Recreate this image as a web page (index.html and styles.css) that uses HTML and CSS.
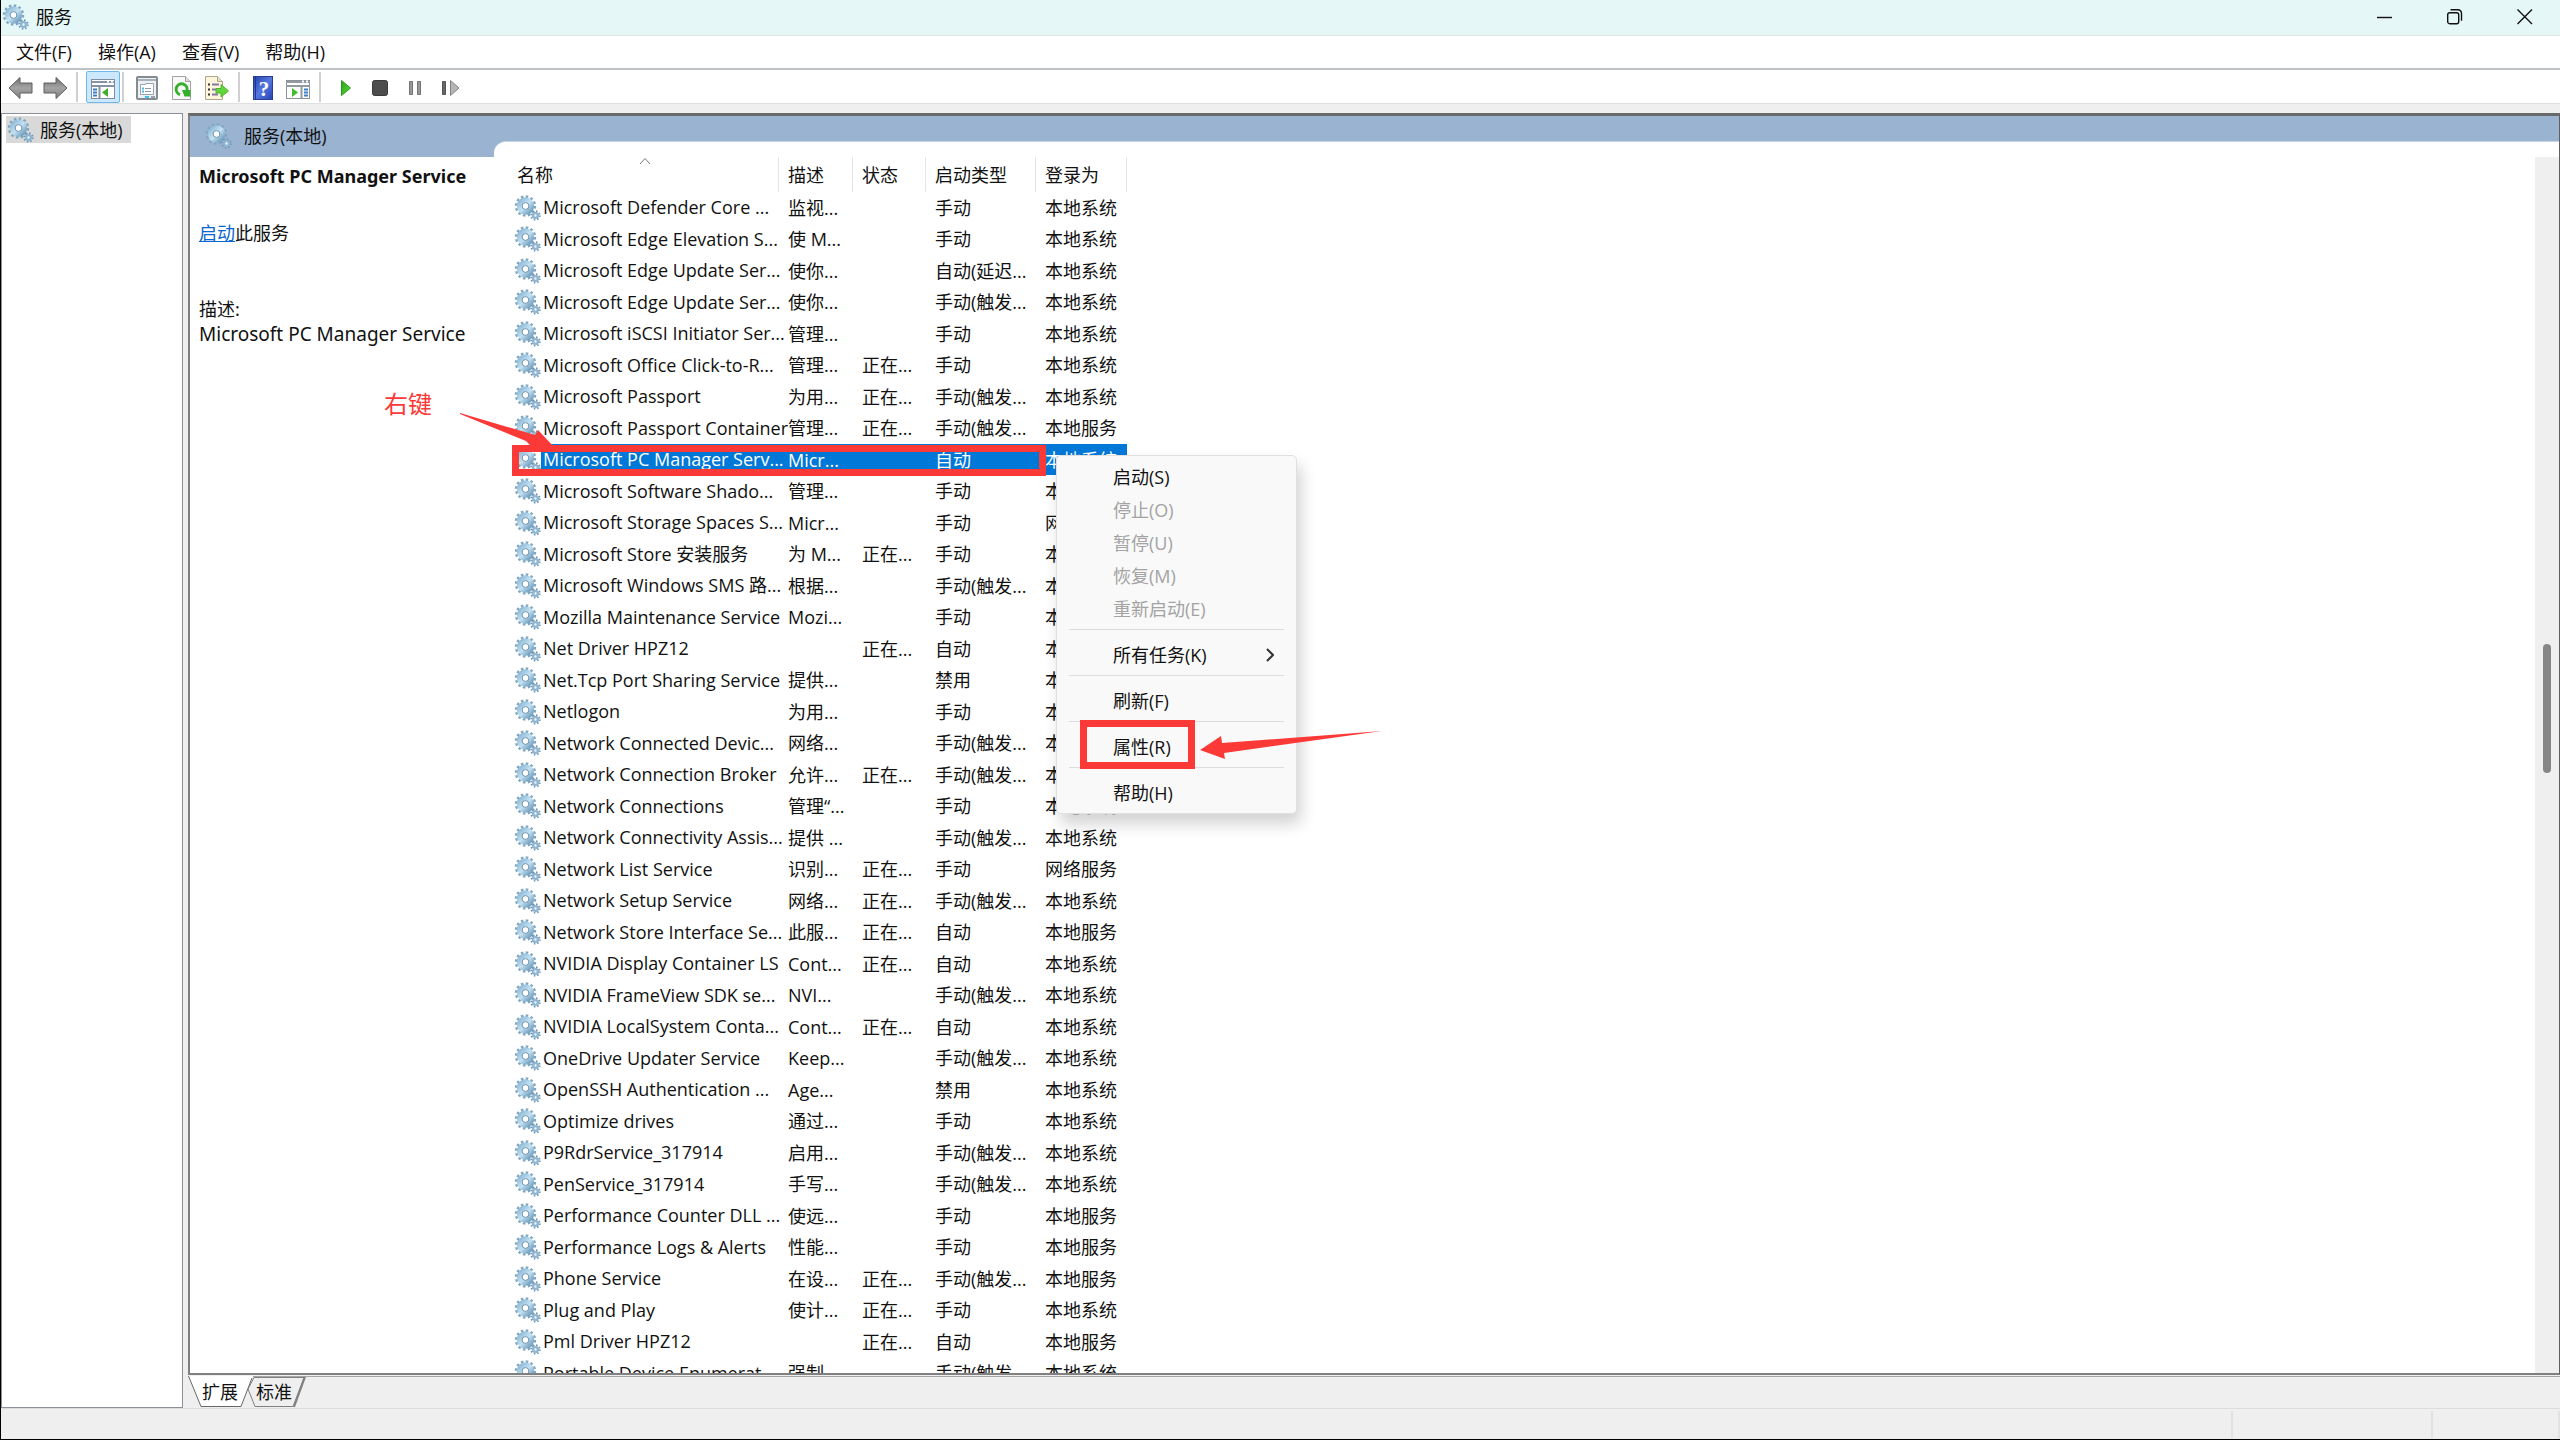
FILE: index.html
```html
<!DOCTYPE html>
<html lang="zh-CN">
<head>
  <meta charset="UTF-8" />
  <title>服务</title>
  <link rel="stylesheet" href="styles.css">
</head>
<body>

  <!-- Shared icons -->
  <svg class="sprite" aria-hidden="true">
    <defs>
      <linearGradient id="ring" x1="0" y1="0" x2="1" y2="1">
        <stop offset="0" stop-color="#8fb9d6" />
        <stop offset="0.5" stop-color="#c4e2f3" />
        <stop offset="1" stop-color="#6f9cbd" />
      </linearGradient>
      <linearGradient id="grey" x1="0" y1="0" x2="0" y2="1">
        <stop offset="0" stop-color="#6e6e6e" />
        <stop offset="0.5" stop-color="#a4a4a4" />
        <stop offset="1" stop-color="#7c7c7c" />
      </linearGradient>
      <linearGradient id="green" x1="0" y1="0" x2="1" y2="1">
        <stop offset="0" stop-color="#2c9e1c" />
        <stop offset="1" stop-color="#58e03c" />
      </linearGradient>
      <linearGradient id="blue" x1="0" y1="0" x2="1" y2="1">
        <stop offset="0" stop-color="#2443a8" />
        <stop offset="0.5" stop-color="#5577e0" />
        <stop offset="1" stop-color="#2443b4" />
      </linearGradient>
      <symbol id="gears" viewBox="0 0 27 26">
        <circle cx="11.5" cy="11" r="9" fill="none" stroke="#7fa6c2" stroke-width="3.4" stroke-dasharray="2.4 2.31" />
        <circle cx="11.5" cy="11" r="6" fill="#fff" stroke="url(#ring)" stroke-width="5.4" />
        <circle cx="11.5" cy="11" r="3.4" fill="#fff" stroke="#6c93b0" stroke-width="1" />
        <circle cx="21.500" cy="20.500" r="4.2" fill="none" stroke="#6e97b6" stroke-width="2" stroke-dasharray="1.5 1.8" />
        <circle cx="21.500" cy="20.500" r="2.4" fill="#eef6fb" stroke="#8fb5d0" stroke-width="2.4" />
      </symbol>
    </defs>
  </svg>

  <header class="titlebar">
    <svg class="gear"><use href="#gears" /></svg>
    <span class="title">服务</span>
    <div class="window-buttons">
      <button aria-label="最小化"><svg width="16" height="16"><path d="M0 8.5h15" /></svg></button>
      <button aria-label="还原"><svg width="16" height="16"><rect x="0.7" y="3.7" width="11" height="11" rx="2" /><path d="M3.5 0.7h7.5a3.5 3.5 0 0 1 3.5 3.5v7.5" /></svg></button>
      <button aria-label="关闭"><svg width="16" height="16"><path d="M0.5 0.5l14.5 14.5M15 0.5l-14.5 14.5" /></svg></button>
    </div>
  </header>

  <nav class="menubar">
    <button>文件(F)</button>
    <button>操作(A)</button>
    <button>查看(V)</button>
    <button>帮助(H)</button>
  </nav>

  <div class="toolbar">
    <button aria-label="后退"><svg width="26" height="24"><path d="M1 12L12 1.5v5.5h12v10H12v5.500z" fill="url(#grey)" stroke="#5e5e5e" /></svg></button>
    <button aria-label="前进"><svg width="26" height="24"><path d="M25 12L14 1.500v5.500H2v10h12v5.500z" fill="url(#grey)" stroke="#5e5e5e" /></svg></button>
    <span class="divider"></span>
    <button class="pressed" aria-label="显示/隐藏控制台树">
      <svg width="26" height="24">
        <rect x="1.500" y="2.500" width="23" height="19" fill="#fff" stroke="#7f8c9a" />
        <path d="M1 5h24M1 9h24" stroke="#8492a2" stroke-width="2" />
        <path d="M17 4.500h2M21 4.500h2" stroke="#fff" stroke-width="2" />
        <path d="M9.500 10v11" stroke="#8492a2" stroke-width="2" />
        <path d="M3 12.500h4M3 15.500h4M3 18.500h4" stroke="#3f7fc4" stroke-width="2" />
        <path d="M18 11v9l-6-4.500z" fill="#3fae2a" />
      </svg>
    </button>
    <span class="divider"></span>
    <div class="tool-group">
      <button aria-label="属性">
        <svg width="26" height="24">
          <rect x="3" y="1" width="20" height="22" rx="1" fill="#eef1f3" stroke="#858b92" stroke-width="2" />
          <path d="M4 4h18" stroke="#a9b0b8" stroke-width="2" />
          <path d="M6.500 8.500h5v-1h8v11h-13z" fill="#fff" stroke="#98a5b3" />
          <path d="M8 12.500h2M8 15.500h2" stroke="#4bb5e5" stroke-width="2" />
          <path d="M11 12.500h6M11 15.500h6" stroke="#9199a3" />
          <path d="M11 21h4" stroke="#33c3ee" stroke-width="2" />
          <path d="M17 21h4" stroke="#9aa1aa" stroke-width="2" />
        </svg>
      </button>
      <button aria-label="刷新">
        <svg width="22" height="24">
          <path d="M1.500 0.500h13l5 5v18h-18z" fill="#f8f8f8" stroke="#a3a3a3" />
          <path d="M14.500 0.500v5h5" fill="#ddd" stroke="#a3a3a3" />
          <path d="M9 18.500a5.500 5.500 0 1 1 7-4" fill="none" stroke="#35b02b" stroke-width="3" />
          <path d="M11 14h8.500v6.500h-6z" fill="#35b02b" />
        </svg>
      </button>
      <button aria-label="导出列表">
        <svg width="26" height="24">
          <path d="M1.500 0.500h12l5 5v18h-17z" fill="#fdf5dc" stroke="#aca68f" />
          <path d="M13.500 0.500v5h5" fill="#e7dfc4" stroke="#aca68f" />
          <path d="M4 8.500h2M4 13.500h2M4 18.500h2" stroke="#333" stroke-width="2" />
          <path d="M8 8.500h7M8 13.500h6M8 18.500h6" stroke="#8874a4" stroke-width="2" />
          <path d="M12 12.500h5v-4l7.500 6.500-7.500 6v-4h-5z" fill="#62d63c" stroke="#4bb42f" />
        </svg>
      </button>
    </div>
    <span class="divider"></span>
    <div class="tool-group help-group">
      <button aria-label="帮助">
        <svg width="22" height="24">
          <rect x="1.500" y="0.500" width="19" height="23" fill="url(#blue)" stroke="#2a3f93" />
          <path d="M3.500 1v22" stroke="#1f3690" />
          <text class="help-mark" x="12" y="20" text-anchor="middle">?</text>
        </svg>
      </button>
      <button aria-label="显示/隐藏操作窗格">
        <svg width="26" height="24">
          <rect x="1.500" y="4.500" width="23" height="18" fill="#fff" stroke="#8c9299" />
          <path d="M1 6h24M1 10h24" stroke="#929aa3" stroke-width="2" />
          <path d="M17 5.500h2M21 5.500h2" stroke="#fff" stroke-width="2" />
          <path d="M16.500 11v11" stroke="#929aa3" stroke-width="2" />
          <path d="M19 13.500h4M19 16.500h4M19 19.500h4" stroke="#3f7fc4" stroke-width="2" />
          <path d="M7 12v9l6-4.500z" fill="#3fbe2a" />
        </svg>
      </button>
    </div>
    <span class="divider"></span>
    <div class="service-buttons">
      <button aria-label="启动服务"><svg width="12" height="18"><path d="M1.500 1.500v15L10.500 9z" fill="url(#green)" stroke="#279a1b" /></svg></button>
      <button aria-label="停止服务"><svg width="16" height="18"><rect x="0.500" y="1.500" width="15" height="15" rx="2" fill="#4c4c4c" stroke="#3a3a3a" /></svg></button>
      <button aria-label="暂停服务"><svg width="14" height="18"><path d="M1.500 2.500h3v13h-3zM9.500 2.500h3v13h-3z" fill="#999" stroke="#727272" /></svg></button>
      <button aria-label="重启动服务"><svg width="18" height="18"><path d="M0.500 2.500h3v13h-3z" fill="#666" stroke="#555" /><path d="M8.500 1.500v15l8.500-7.500z" fill="#b5b5b5" stroke="#858585" /></svg></button>
    </div>
  </div>

  <main class="console">
    <aside class="tree">
      <a class="tree-item" href="#services">
        <svg class="gear"><use href="#gears" /></svg>
        服务(本地)
      </a>
    </aside>

    <section class="pane" id="services">
      <div class="pane-frame">
        <div class="pane-header">
          <div class="pane-title">
            <svg class="gear"><use href="#gears" /></svg>
            服务(本地)
          </div>
          <div class="pane-curve"></div>
        </div>
        <div class="pane-body">
          <div class="details">
            <h2>Microsoft PC Manager Service</h2>
            <p class="action"><a href="#start">启动</a>此服务</p>
            <p>描述:</p>
            <p class="description">Microsoft PC Manager Service</p>
          </div>
          <div class="list">
            <table>
              <colgroup>
                <col class="col-name"><col class="col-desc"><col class="col-status"><col class="col-startup"><col class="col-logon">
              </colgroup>
              <thead>
                <tr>
                  <th>名称<svg class="sort" width="12" height="8"><path d="M1 7l5-5.500 5 5.500" /></svg></th>
                  <th>描述</th>
                  <th>状态</th>
                  <th>启动类型</th>
                  <th>登录为</th>
                </tr>
              </thead>
              <tbody id="serviceRows"></tbody>
            </table>
          </div>
          <div class="scrollbar"><div class="thumb"></div></div>
        </div>
      </div>
      <div class="view-tabs">
        <svg class="tab-shapes" width="122" height="34">
          <path d="M60 13L66 1.500h50L105 30.500H67z" fill="#efefef" stroke="#808080" />
          <path d="M117 1L106 31" stroke="#808080" stroke-width="2" />
          <path d="M0 0L13 30.500h40L65 0z" fill="#fff" />
          <path d="M0.500 0L13 30.500h40L64 2" fill="none" stroke="#666" />
        </svg>
        <button>扩展</button>
        <button>标准</button>
      </div>
    </section>
  </main>

  <footer class="statusbar">
    <span class="status-main"></span>
    <span class="status-progress"></span>
    <span class="status-end"></span>
  </footer>

  <!-- Right-click menu -->
  <div class="context-menu" role="menu">
    <button role="menuitem">启动(S)</button>
    <button role="menuitem" disabled>停止(O)</button>
    <button role="menuitem" disabled>暂停(U)</button>
    <button role="menuitem" disabled>恢复(M)</button>
    <button role="menuitem" disabled>重新启动(E)</button>
    <hr>
    <button role="menuitem">所有任务(K)<svg width="8" height="14"><path d="M1 1l6 6-6 6" /></svg></button>
    <hr>
    <button role="menuitem">刷新(F)</button>
    <hr>
    <button role="menuitem">属性(R)</button>
    <hr>
    <button role="menuitem">帮助(H)</button>
  </div>

  <!-- Guide marks -->
  <div class="mark mark-row"></div>
  <div class="mark mark-properties"></div>
  <span class="mark-label">右键</span>
  <svg class="arrow arrow-row" width="96" height="36"><path d="M0 0v1L66 28l6 6h22L78 17l-3 5z" /></svg>
  <svg class="arrow arrow-properties" width="184" height="30"><path d="M0 19L21 5l1 7L182 0 24 22l1 6z" /></svg>

  <script src="services.js"></script>
</body>
</html>
```

FILE: styles.css
```css
* {
  box-sizing: border-box;
}

body {
  margin: 0;
  height: 100vh;
  display: flex;
  flex-direction: column;
  position: relative;
  overflow: hidden;
  border-left: 1px solid #000;
  border-bottom: 1px solid #000;
  background: #efefef;
  color: #111;
  font-family: "Open Sans", "Noto Sans CJK SC", sans-serif;
  font-size: 18px;
  line-height: 24px;
}

button {
  display: flex;
  align-items: center;
  padding: 0;
  border: 0;
  background: none;
  color: inherit;
  font: inherit;
}

.sprite {
  position: absolute;
  width: 0;
  height: 0;
}

.gear {
  width: 27px;
  height: 26px;
  flex: none;
}

/* Title bar */
.titlebar {
  display: flex;
  align-items: center;
  height: 36px;
  padding: 0 0 2px 1px;
  background: #e5f8f7;
  border-bottom: 1px solid #dde5e5;
}

.title {
  flex: 1;
  padding-left: 7px;
}

.window-buttons {
  display: flex;
}

.window-buttons button {
  width: 70px;
  height: 32px;
  justify-content: center;
}

.window-buttons svg {
  fill: none;
  stroke: #111;
  stroke-width: 1.4;
}

/* Menu bar */
.menubar {
  display: flex;
  gap: 26px;
  height: 34px;
  padding-left: 15px;
  background: #fff;
  border-bottom: 2px solid #bfc3c6;
}

/* Toolbar */
.toolbar {
  display: flex;
  align-items: center;
  gap: 8px;
  height: 34px;
  padding-left: 7px;
  background: #fff;
  border-bottom: 1px solid #e0e0e0;
}

.toolbar svg {
  margin-top: 3px;
}

.toolbar .divider {
  width: 2px;
  height: 30px;
  background: #d0d0d0;
}

.toolbar .pressed {
  height: 32px;
  padding: 2px 3px 0;
  border: 1px solid #6fb6ea;
  border-radius: 2px;
  background: #cce8ff;
}

.toolbar .pressed + .divider {
  margin-left: -6px;
  margin-right: 2px;
}

.tool-group {
  display: flex;
  gap: 11px;
}

.help-group {
  padding-left: 4px;
}

.help-mark {
  fill: #fff;
  font: bold 21px "Liberation Serif", serif;
}

.service-buttons {
  display: flex;
  gap: 20px;
  padding-left: 11px;
}

/* Console */
.console {
  flex: 1;
  min-height: 0;
  display: flex;
  padding-top: 9px;
  gap: 5px;
}

.tree {
  width: 182px;
  padding: 2px 4px;
  background: #fff;
  border: 1px solid #8b9099;
}

.tree-item {
  display: flex;
  align-items: center;
  gap: 6px;
  width: 125px;
  height: 27px;
  padding-left: 1px;
  background: #d9d9d9;
  color: inherit;
  text-decoration: none;
  white-space: nowrap;
}

.pane {
  flex: 1;
  min-width: 0;
  display: flex;
  flex-direction: column;
}

.pane-frame {
  flex: 1;
  min-height: 0;
  display: flex;
  flex-direction: column;
  background: #fff;
  border: 2px solid #808080;
  border-top: 3px solid #6a6a6a;
  border-right: 1px solid #606060;
}

.pane-header {
  display: flex;
  align-items: flex-end;
  flex: none;
  height: 41px;
  background: #99b3d1;
}

.pane-title {
  display: flex;
  align-items: center;
  gap: 12px;
  width: 304px;
  height: 41px;
  padding: 0 0 1px 15px;
}

.pane-curve {
  flex: 1;
  height: 16px;
  background: #fff;
  border-top: 1px solid #c5d6e8;
  border-top-left-radius: 12px;
}

.pane-body {
  flex: 1;
  min-height: 0;
  display: flex;
}

.details {
  width: 321px;
  padding: 7px 9px;
  font-family: "Noto Sans", "Noto Sans CJK SC", sans-serif;
}

.details h2 {
  margin: 0;
  font-size: 18px;
  line-height: 24px;
  white-space: nowrap;
}

.details p {
  margin: 0;
}

.details .action {
  margin: 33px 0 52px;
}

.details .description {
  font-size: 19px;
  line-height: 26px;
}

.details a {
  color: #0a66d0;
}

/* Service list */
.list {
  flex: 1;
  overflow: hidden;
}

table {
  width: 616px;
  table-layout: fixed;
  border-collapse: separate;
  border-spacing: 0;
}

.col-name {
  width: 268px;
}

.col-desc {
  width: 74px;
}

.col-status {
  width: 73px;
}

.col-startup {
  width: 110px;
}

.col-logon {
  width: 91px;
}

th,
td {
  padding: 0 0 0 9px;
  text-align: left;
  font-weight: normal;
  white-space: nowrap;
}

th {
  position: relative;
  height: 35px;
  border-right: 1px solid #e5e5e5;
}

th:first-child {
  padding-left: 6px;
}

.sort {
  position: absolute;
  top: 0;
  left: 48%;
  fill: none;
  stroke: #777;
}

tbody tr {
  height: 31px;
}

tbody tr:nth-child(even) {
  height: 32px;
}

td:first-child {
  padding-left: 3px;
}

.service-name {
  display: flex;
  align-items: center;
}

.service-name span {
  flex: 1;
  padding-left: 2px;
  line-height: 31px;
}

.selected td:not(:first-child),
.selected span {
  background: #0078d7;
  color: #fff;
}

.scrollbar {
  width: 24px;
  padding: 487px 8px 0;
  background: #efefef;
}

.thumb {
  height: 129px;
  border-radius: 4px;
  background: #868686;
}

/* Bottom tabs and status bar */
.view-tabs {
  position: relative;
  display: flex;
  gap: 18px;
  height: 32px;
  margin-top: 1px;
  padding: 0 0 2px 14px;
  border-top: 1px solid #a5a5a5;
}

.view-tabs button {
  position: relative;
}

.tab-shapes {
  position: absolute;
  top: -1px;
  left: 0;
}

.statusbar {
  display: flex;
  height: 31px;
  border-top: 1px solid #dcdcdc;
}

.statusbar span {
  margin-top: 2px;
  border-right: 2px solid #e2e2e2;
}

.status-main {
  flex: 1;
}

.status-progress {
  width: 200px;
}

.status-end {
  width: 127px;
}

/* Context menu */
.context-menu {
  position: absolute;
  top: 455px;
  left: 1055px;
  width: 241px;
  padding: 4px 0;
  background: #f9f9f9;
  border: 1px solid #e0e0e0;
  border-radius: 5px;
  box-shadow: 4px 10px 16px rgba(0, 0, 0, 0.18);
}

.context-menu button {
  width: 100%;
  height: 33px;
  padding: 0 22px 0 56px;
  justify-content: space-between;
}

.context-menu button:disabled {
  color: #a3a3a3;
}

.context-menu svg {
  fill: none;
  stroke: #333;
  stroke-width: 2;
}

.context-menu hr {
  height: 1px;
  margin: 4px 12px 8px;
  border: 0;
  background: #dcdcdc;
}

/* Guide marks */
.mark {
  position: absolute;
  border: 7px solid #fb3a38;
}

.mark-row {
  top: 445px;
  left: 511px;
  width: 534px;
  height: 31px;
}

.mark-properties {
  top: 720px;
  left: 1079px;
  width: 115px;
  height: 49px;
}

.mark-label {
  position: absolute;
  top: 388px;
  left: 383px;
  color: #fb3a38;
  font-size: 24px;
  line-height: 32px;
}

.arrow {
  position: absolute;
  fill: #fb3a38;
}

.arrow-row {
  top: 413px;
  left: 459px;
}

.arrow-properties {
  top: 731px;
  left: 1199px;
}
```

FILE: services.js
```js
const services = [
  ['Microsoft Defender Core ...', '监视...', '', '手动', '本地系统'],
  ['Microsoft Edge Elevation S...', '使 M...', '', '手动', '本地系统'],
  ['Microsoft Edge Update Ser...', '使你...', '', '自动(延迟...', '本地系统'],
  ['Microsoft Edge Update Ser...', '使你...', '', '手动(触发...', '本地系统'],
  ['Microsoft iSCSI Initiator Ser...', '管理...', '', '手动', '本地系统'],
  ['Microsoft Office Click-to-R...', '管理...', '正在...', '手动', '本地系统'],
  ['Microsoft Passport', '为用...', '正在...', '手动(触发...', '本地系统'],
  ['Microsoft Passport Container', '管理...', '正在...', '手动(触发...', '本地服务'],
  ['Microsoft PC Manager Serv...', 'Micr...', '', '自动', '本地系统'],
  ['Microsoft Software Shado...', '管理...', '', '手动', '本地系统'],
  ['Microsoft Storage Spaces S...', 'Micr...', '', '手动', '网络服务'],
  ['Microsoft Store 安装服务', '为 M...', '正在...', '手动', '本地系统'],
  ['Microsoft Windows SMS 路...', '根据...', '', '手动(触发...', '本地系统'],
  ['Mozilla Maintenance Service', 'Mozi...', '', '手动', '本地系统'],
  ['Net Driver HPZ12', '', '正在...', '自动', '本地服务'],
  ['Net.Tcp Port Sharing Service', '提供...', '', '禁用', '本地服务'],
  ['Netlogon', '为用...', '', '手动', '本地系统'],
  ['Network Connected Devic...', '网络...', '', '手动(触发...', '本地服务'],
  ['Network Connection Broker', '允许...', '正在...', '手动(触发...', '本地系统'],
  ['Network Connections', '管理“...', '', '手动', '本地系统'],
  ['Network Connectivity Assis...', '提供 ...', '', '手动(触发...', '本地系统'],
  ['Network List Service', '识别...', '正在...', '手动', '网络服务'],
  ['Network Setup Service', '网络...', '正在...', '手动(触发...', '本地系统'],
  ['Network Store Interface Se...', '此服...', '正在...', '自动', '本地服务'],
  ['NVIDIA Display Container LS', 'Cont...', '正在...', '自动', '本地系统'],
  ['NVIDIA FrameView SDK se...', 'NVI...', '', '手动(触发...', '本地系统'],
  ['NVIDIA LocalSystem Conta...', 'Cont...', '正在...', '自动', '本地系统'],
  ['OneDrive Updater Service', 'Keep...', '', '手动(触发...', '本地系统'],
  ['OpenSSH Authentication ...', 'Age...', '', '禁用', '本地系统'],
  ['Optimize drives', '通过...', '', '手动', '本地系统'],
  ['P9RdrService_317914', '启用...', '', '手动(触发...', '本地系统'],
  ['PenService_317914', '手写...', '', '手动(触发...', '本地系统'],
  ['Performance Counter DLL ...', '使远...', '', '手动', '本地服务'],
  ['Performance Logs & Alerts', '性能...', '', '手动', '本地服务'],
  ['Phone Service', '在设...', '正在...', '手动(触发...', '本地服务'],
  ['Plug and Play', '使计...', '正在...', '手动', '本地系统'],
  ['Pml Driver HPZ12', '', '正在...', '自动', '本地服务'],
  ['Portable Device Enumerat...', '强制...', '', '手动(触发...', '本地系统']
];

const selectedService = 'Microsoft PC Manager Serv...';
const rows = document.getElementById('serviceRows');

services.forEach(service => {
  const row = document.createElement('tr');
  if (service[0] === selectedService) {
    row.className = 'selected';
  }

  service.forEach((text, index) => {
    const cell = document.createElement('td');
    if (index === 0) {
      cell.innerHTML = '<div class="service-name"><svg class="gear"><use href="#gears" /></svg><span></span></div>';
      cell.querySelector('span').textContent = text;
    } else {
      cell.textContent = text;
    }
    row.appendChild(cell);
  });

  rows.appendChild(row);
});
```
